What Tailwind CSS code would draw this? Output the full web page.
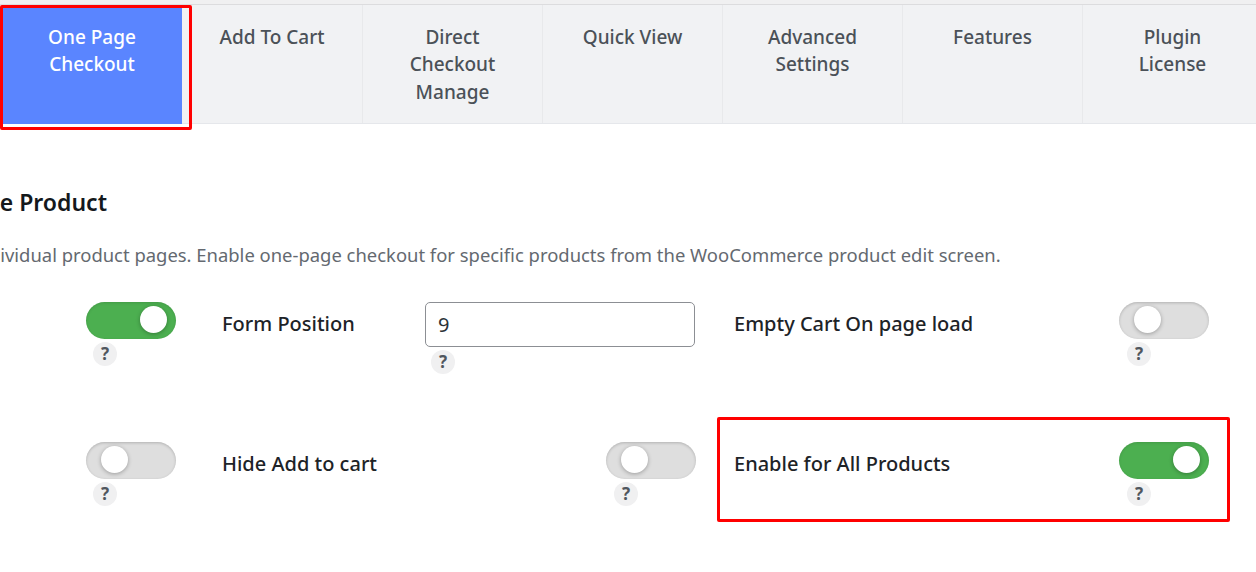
<!DOCTYPE html>
<html>
<head>
<meta charset="utf-8">
<script src="https://cdn.jsdelivr.net/npm/@tailwindcss/browser@4"></script>
</head>
<body class="bg-white">
<div class="relative w-[1256px] h-[572px] overflow-hidden bg-white font-['Noto_Sans','Open_Sans',sans-serif] text-[#1d2327]">
  <div class="h-[124px] pt-[4px] bg-[#f0f0f1]">
    <div class="flex h-[120px] pl-[2px] border-t border-b border-t-[#dcdcde] border-b-[#e5e7eb] bg-[#f1f2f4]">
      <div class="w-[180px] shrink-0 -mb-px pt-[18.6px] px-8 text-center bg-[#5a85ff] text-white text-[19px] leading-[27.5px] font-medium">One Page Checkout</div>
      <div class="w-[180px] shrink-0 pt-[18.6px] px-8 text-center text-[#4b5158] text-[19px] leading-[27.5px] font-medium">Add To Cart</div>
      <div class="w-[180px] shrink-0 pt-[18.6px] px-8 text-center border-l border-[#e8e9eb] text-[#4b5158] text-[19px] leading-[27.5px] font-medium">Direct Checkout Manage</div>
      <div class="w-[180px] shrink-0 pt-[18.6px] px-8 text-center border-l border-[#e8e9eb] text-[#4b5158] text-[19px] leading-[27.5px] font-medium">Quick View</div>
      <div class="w-[180px] shrink-0 pt-[18.6px] px-8 text-center border-l border-[#e8e9eb] text-[#4b5158] text-[19px] leading-[27.5px] font-medium">Advanced Settings</div>
      <div class="w-[180px] shrink-0 pt-[18.6px] px-8 text-center border-l border-[#e8e9eb] text-[#4b5158] text-[19px] leading-[27.5px] font-medium">Features</div>
      <div class="w-[180px] shrink-0 pt-[18.6px] px-8 text-center border-l border-[#e8e9eb] text-[#4b5158] text-[19px] leading-[27.5px] font-medium">Plugin License</div>
    </div>
  </div>

  <h2 class="mt-[62px] -ml-[55px] w-[400px] text-[23px] leading-[32px] font-semibold text-[#14181c] whitespace-nowrap">Single Product</h2>
  <p class="mt-[23px] -ml-[132px] text-[18.43px] leading-[28px] text-[#646970] whitespace-nowrap">Settings for individual product pages. Enable one-page checkout for specific products from the WooCommerce product edit screen.</p>

  <div class="mt-[33px] pl-[86px] grid grid-cols-[136px_203px_270px_39px_475px] grid-rows-[140px_100px]">
    <div class="flex flex-col items-start"><span class="relative block w-[90px] h-[37px] rounded-full bg-[#4caf50] shadow-[inset_0_1px_3px_rgba(0,0,0,0.12)]"><span class="absolute right-[9px] top-[4px] w-[27px] h-[27px] rounded-full bg-white shadow-[0_1px_4px_rgba(0,0,0,0.3)]"></span></span><span class="ml-[7px] mt-[3px] w-6 h-6 rounded-full bg-[#f0f0f1] text-[#50575e] text-[17px] font-bold leading-6 text-center">?</span></div>
    <div class="pt-[6px] text-[20px] leading-[32px] font-medium">Form Position</div>
    <div class="flex flex-col items-start"><input value="9" class="w-[270px] h-[45px] px-3 rounded-[5px] border border-[#8c8f94] text-[20px] text-[#2c3338] bg-white"><span class="ml-[6px] mt-[3px] w-6 h-6 rounded-full bg-[#f0f0f1] text-[#50575e] text-[17px] font-bold leading-6 text-center">?</span></div>
    <div></div>
    <div class="flex items-start justify-between"><div class="pt-[6px] text-[20px] leading-[32px] font-medium">Empty Cart On page load</div><div class="flex flex-col items-start"><span class="relative block w-[90px] h-[37px] rounded-full bg-[#dedede] shadow-[inset_0_1px_3px_rgba(0,0,0,0.2)]"><span class="absolute left-[15px] top-[4px] w-[27px] h-[27px] rounded-full bg-white shadow-[0_1px_4px_rgba(0,0,0,0.3)]"></span></span><span class="ml-[8px] mt-[3px] w-6 h-6 rounded-full bg-[#f0f0f1] text-[#50575e] text-[17px] font-bold leading-6 text-center">?</span></div></div>

    <div class="flex flex-col items-start"><span class="relative block w-[90px] h-[37px] rounded-full bg-[#dedede] shadow-[inset_0_1px_3px_rgba(0,0,0,0.2)]"><span class="absolute left-[15px] top-[4px] w-[27px] h-[27px] rounded-full bg-white shadow-[0_1px_4px_rgba(0,0,0,0.3)]"></span></span><span class="ml-[7px] mt-[3px] w-6 h-6 rounded-full bg-[#f0f0f1] text-[#50575e] text-[17px] font-bold leading-6 text-center">?</span></div>
    <div class="col-span-2 flex items-start justify-between"><div class="pt-[6px] text-[20px] leading-[32px] font-medium">Hide Add to cart</div><div class="flex flex-col items-start mr-[-1px]"><span class="relative block w-[90px] h-[37px] rounded-full bg-[#dedede] shadow-[inset_0_1px_3px_rgba(0,0,0,0.2)]"><span class="absolute left-[15px] top-[4px] w-[27px] h-[27px] rounded-full bg-white shadow-[0_1px_4px_rgba(0,0,0,0.3)]"></span></span><span class="ml-[8px] mt-[3px] w-6 h-6 rounded-full bg-[#f0f0f1] text-[#50575e] text-[17px] font-bold leading-6 text-center">?</span></div></div>
    <div></div>
    <div class="flex items-start justify-between"><div class="pt-[6px] text-[20px] leading-[32px] font-medium">Enable for All Products</div><div class="flex flex-col items-start"><span class="relative block w-[90px] h-[37px] rounded-full bg-[#4caf50] shadow-[inset_0_1px_3px_rgba(0,0,0,0.12)]"><span class="absolute right-[9px] top-[4px] w-[27px] h-[27px] rounded-full bg-white shadow-[0_1px_4px_rgba(0,0,0,0.3)]"></span></span><span class="ml-[8px] mt-[3px] w-6 h-6 rounded-full bg-[#f0f0f1] text-[#50575e] text-[17px] font-bold leading-6 text-center">?</span></div></div>
  </div>

  <div class="absolute left-0 top-[5px] w-[192px] h-[125px] border-[3px] border-[#f00] rounded-[2px]"></div>
  <div class="absolute left-[717px] top-[417px] w-[513px] h-[105px] border-[3px] border-[#f00] rounded-[2px]"></div>
</div>
</body>
</html>
